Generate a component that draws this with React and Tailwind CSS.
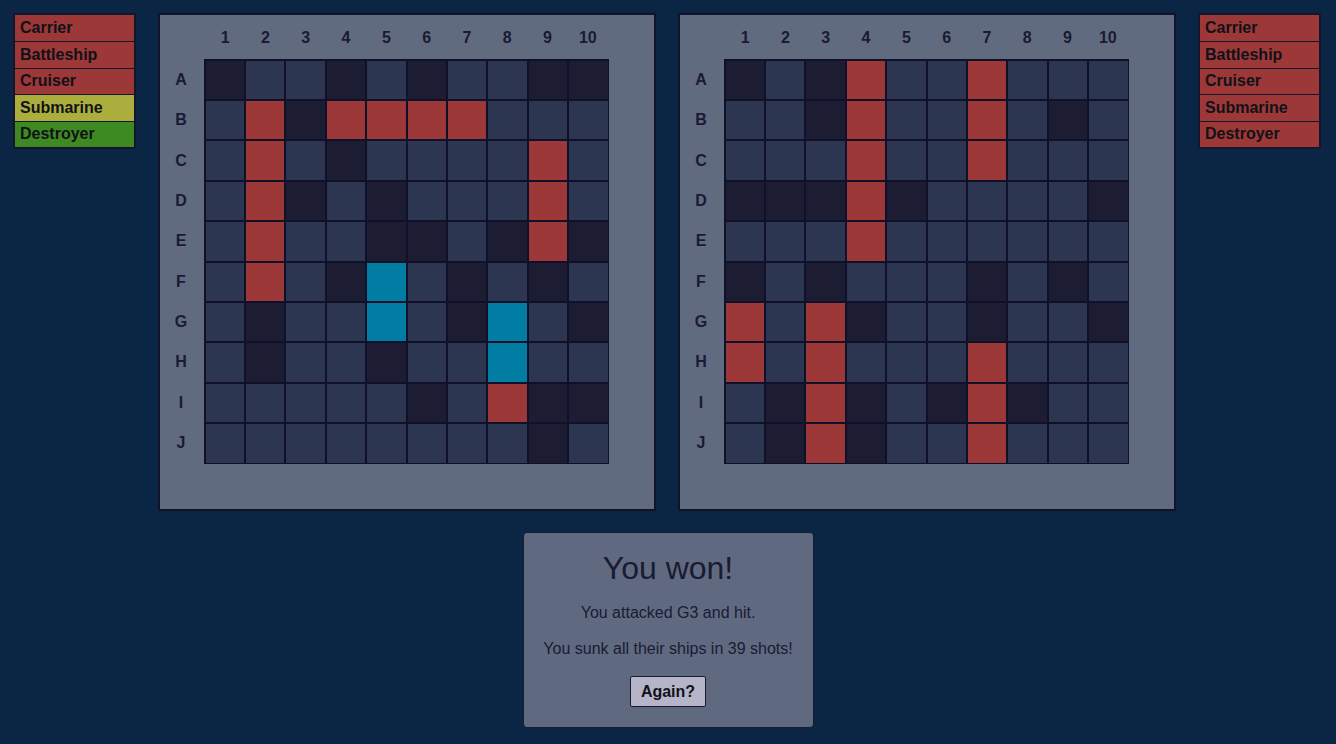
import React from 'react';

// D = miss (dark), L = water, R = hit, C = own ship (afloat)
const LEFT_BOARD = [
  'DLLDLDLLDD',
  'LRDRRRRLLL',
  'LRLDLLLLRL',
  'LRDLDLLLRL',
  'LRLLDDLDRD',
  'LRLDCLDLDL',
  'LDLLCLDCLD',
  'LDLLDLLCLL',
  'LLLLLDLRDD',
  'LLLLLLLLDL',
];

const RIGHT_BOARD = [
  'DLDRLLRLLL',
  'LLDRLLRLDL',
  'LLLRLLRLLL',
  'DDDRDLLLLD',
  'LLLRLLLLLL',
  'DLDLLLDLDL',
  'RLRDLLDLLD',
  'RLRLLLRLLL',
  'LDRDLDRDLL',
  'LDRDLLRLLL',
];

const ROWS = ['A', 'B', 'C', 'D', 'E', 'F', 'G', 'H', 'I', 'J'];
const COLS = ['1', '2', '3', '4', '5', '6', '7', '8', '9', '10'];

const CELL = {
  D: 'bg-[#1c1c33]',
  L: 'bg-[#2c3650]',
  R: 'bg-[#9c3838]',
  C: 'bg-[#017ca2]',
};

const SHIP_BG = {
  sunk: 'bg-[#9c3838]',
  hit: 'bg-[#abae3c]',
  ok: 'bg-[#3d8a22]',
};

function ShipList({ ships }) {
  return (
    <div className="w-[123px] shrink-0 self-start border-2 border-[#15152b] rounded-[2px] flex flex-col">
      {ships.map((s, i) => (
        <div
          key={s.name}
          className={`h-[26.4px] flex items-center pl-[5px] text-[16px] font-bold text-[#111118] ${SHIP_BG[s.state]} ${i > 0 ? 'border-t border-[#15152b]' : ''}`}
        >
          {s.name}
        </div>
      ))}
    </div>
  );
}

function Board({ data }) {
  return (
    <div className="w-[498px] h-[498px] shrink-0 bg-[#606b80] border-2 border-[#12122a] flex flex-col">
      {/* column header */}
      <div className="h-[44px] flex items-center pl-[44px] pt-[1px]">
        <div className="w-[405px] grid grid-cols-10 px-[1px]">
          {COLS.map(c => (
            <div key={c} className="text-center text-[16px] font-bold text-[#1a1a33]">{c}</div>
          ))}
        </div>
      </div>
      <div className="flex">
        {/* row labels */}
        <div className="w-[44px] grid grid-rows-10 h-[405px] py-[1px]">
          {ROWS.map(r => (
            <div key={r} className="flex items-center justify-center pr-[2px] text-[16px] font-bold text-[#1a1a33]">{r}</div>
          ))}
        </div>
        <div className="w-[405px] h-[405px] bg-[#10102a] p-[1.5px] grid grid-cols-10 grid-rows-10 gap-[2px]">
          {data.map((row, ri) =>
            row.split('').map((v, ci) => (
              <div key={`${ri}-${ci}`} className={CELL[v]} />
            ))
          )}
        </div>
      </div>
    </div>
  );
}

export default function App() {
  const myShips = [
    { name: 'Carrier', state: 'sunk' },
    { name: 'Battleship', state: 'sunk' },
    { name: 'Cruiser', state: 'sunk' },
    { name: 'Submarine', state: 'hit' },
    { name: 'Destroyer', state: 'ok' },
  ];
  const theirShips = myShips.map(s => ({ name: s.name, state: 'sunk' }));

  return (
    <div className="min-h-[744px] w-full bg-[#0b2644] font-['Liberation_Sans',Arial,sans-serif] pt-[13px] px-[13px]">
      <div className="flex gap-[22px]">
        <ShipList ships={myShips} />
        <Board data={LEFT_BOARD} />
        <Board data={RIGHT_BOARD} />
        <ShipList ships={theirShips} />
      </div>

      {/* result dialog */}
      <div className="mt-[21px] flex justify-center">
        <div className="w-[291px] h-[196px] bg-[#5f6a80] border border-[#1a1a2e] rounded-[4px] flex flex-col items-center text-[#1a1a33]">
          <div className="mt-[17px] text-[32px] leading-[37px]">You won!</div>
          <div className="mt-[17px] text-[16px] leading-[18px]">You attacked G3 and hit.</div>
          <div className="mt-[18px] text-[16px] leading-[18px]">You sunk all their ships in 39 shots!</div>
          <button className="mt-[18px] w-[76px] h-[31px] bg-[#b5b4c8] border border-[#1a1a2e] rounded-[2px] text-[16px] font-bold text-[#111118]">
            Again?
          </button>
        </div>
      </div>
    </div>
  );
}
